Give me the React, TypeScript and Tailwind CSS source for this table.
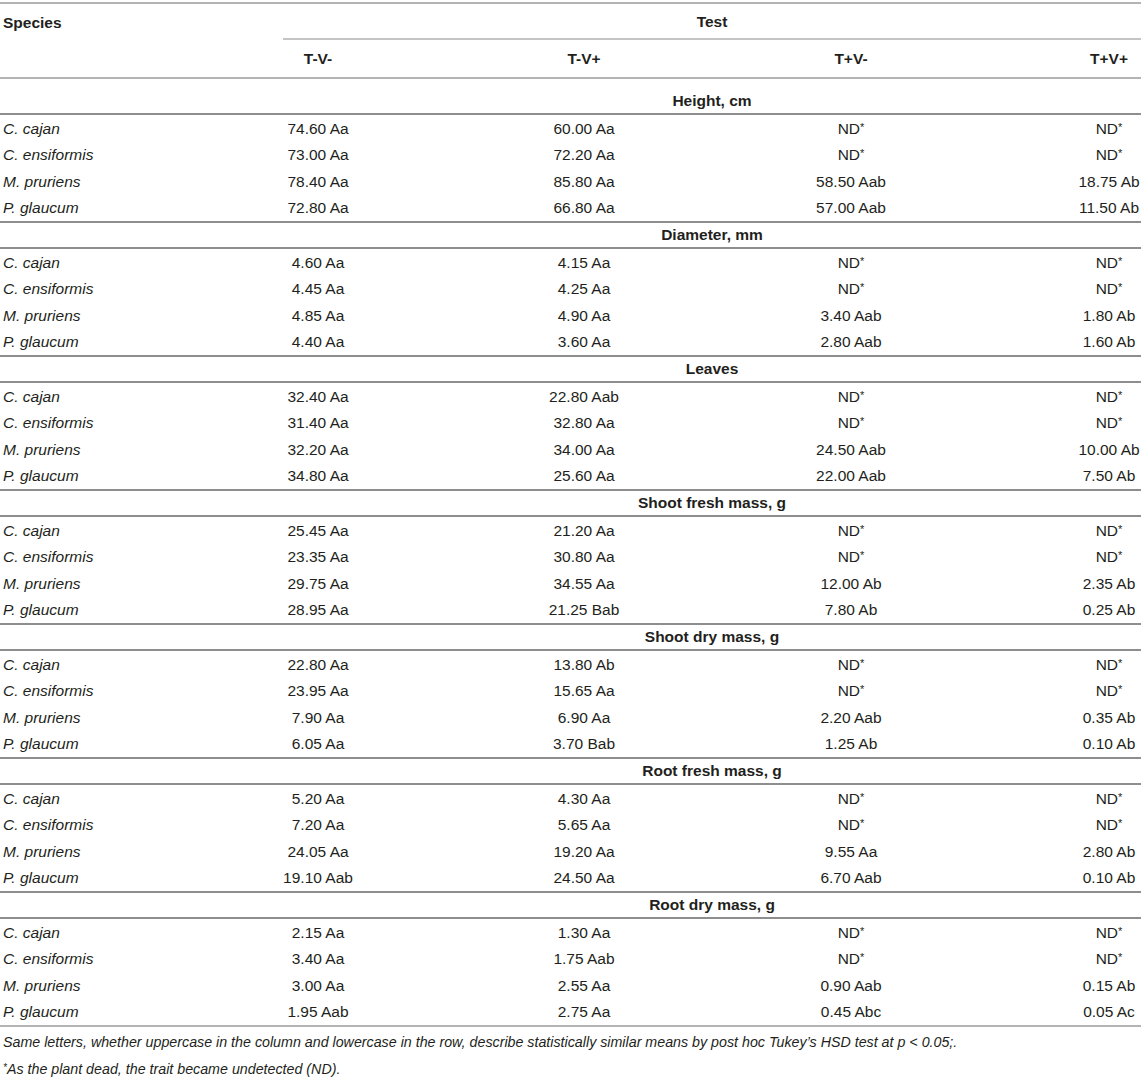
const sections: { title: string; rows: [string, string, string, string, string][] }[] = [
  {
    title: "Height, cm",
    rows: [
      ["C. cajan", "74.60 Aa", "60.00 Aa", "ND*", "ND*"],
      ["C. ensiformis", "73.00 Aa", "72.20 Aa", "ND*", "ND*"],
      ["M. pruriens", "78.40 Aa", "85.80 Aa", "58.50 Aab", "18.75 Ab"],
      ["P. glaucum", "72.80 Aa", "66.80 Aa", "57.00 Aab", "11.50 Ab"],
    ],
  },
  {
    title: "Diameter, mm",
    rows: [
      ["C. cajan", "4.60 Aa", "4.15 Aa", "ND*", "ND*"],
      ["C. ensiformis", "4.45 Aa", "4.25 Aa", "ND*", "ND*"],
      ["M. pruriens", "4.85 Aa", "4.90 Aa", "3.40 Aab", "1.80 Ab"],
      ["P. glaucum", "4.40 Aa", "3.60 Aa", "2.80 Aab", "1.60 Ab"],
    ],
  },
  {
    title: "Leaves",
    rows: [
      ["C. cajan", "32.40 Aa", "22.80 Aab", "ND*", "ND*"],
      ["C. ensiformis", "31.40 Aa", "32.80 Aa", "ND*", "ND*"],
      ["M. pruriens", "32.20 Aa", "34.00 Aa", "24.50 Aab", "10.00 Ab"],
      ["P. glaucum", "34.80 Aa", "25.60 Aa", "22.00 Aab", "7.50 Ab"],
    ],
  },
  {
    title: "Shoot fresh mass, g",
    rows: [
      ["C. cajan", "25.45 Aa", "21.20 Aa", "ND*", "ND*"],
      ["C. ensiformis", "23.35 Aa", "30.80 Aa", "ND*", "ND*"],
      ["M. pruriens", "29.75 Aa", "34.55 Aa", "12.00 Ab", "2.35 Ab"],
      ["P. glaucum", "28.95 Aa", "21.25 Bab", "7.80 Ab", "0.25 Ab"],
    ],
  },
  {
    title: "Shoot dry mass, g",
    rows: [
      ["C. cajan", "22.80 Aa", "13.80 Ab", "ND*", "ND*"],
      ["C. ensiformis", "23.95 Aa", "15.65 Aa", "ND*", "ND*"],
      ["M. pruriens", "7.90 Aa", "6.90 Aa", "2.20 Aab", "0.35 Ab"],
      ["P. glaucum", "6.05 Aa", "3.70 Bab", "1.25 Ab", "0.10 Ab"],
    ],
  },
  {
    title: "Root fresh mass, g",
    rows: [
      ["C. cajan", "5.20 Aa", "4.30 Aa", "ND*", "ND*"],
      ["C. ensiformis", "7.20 Aa", "5.65 Aa", "ND*", "ND*"],
      ["M. pruriens", "24.05 Aa", "19.20 Aa", "9.55 Aa", "2.80 Ab"],
      ["P. glaucum", "19.10 Aab", "24.50 Aa", "6.70 Aab", "0.10 Ab"],
    ],
  },
  {
    title: "Root dry mass, g",
    rows: [
      ["C. cajan", "2.15 Aa", "1.30 Aa", "ND*", "ND*"],
      ["C. ensiformis", "3.40 Aa", "1.75 Aab", "ND*", "ND*"],
      ["M. pruriens", "3.00 Aa", "2.55 Aa", "0.90 Aab", "0.15 Ab"],
      ["P. glaucum", "1.95 Aab", "2.75 Aa", "0.45 Abc", "0.05 Ac"],
    ],
  },
];

const gridCols = "grid grid-cols-[185px_266px_266px_268px_156px]";

// "ND*" shows its asterisk small and raised, as in the printed table
function Value({ value }: { value: string }) {
  if (value.endsWith("*")) {
    return (
      <span>
        {value.slice(0, -1)}
        <span className="text-[11px] align-[3px]">*</span>
      </span>
    );
  }
  return <span>{value}</span>;
}

function Cell({ value, last }: { value: string; last?: boolean }) {
  return (
    <div className={"flex items-center justify-center whitespace-nowrap " + (last ? "pl-[98px] pr-[6px]" : "")}>
      <Value value={value} />
    </div>
  );
}

function DataRow({ row }: { row: [string, string, string, string, string] }) {
  return (
    <div className={gridCols + " h-[26.5px]"}>
      <div className="flex items-center pl-[3px] italic">{row[0]}</div>
      <Cell value={row[1]} />
      <Cell value={row[2]} />
      <Cell value={row[3]} />
      <Cell value={row[4]} last />
    </div>
  );
}

export default function App() {
  return (
    <div className="bg-white pt-[2px] font-['Liberation_Sans',Arial,sans-serif] text-[15.5px] text-[#231f20]">
      <div className="w-[1141px] border-t-2 border-[#b4b4b4]">
        <div className="flex h-[36px]">
          <div className="w-[283px] pl-[3px] pt-[1px] flex items-center font-bold">Species</div>
          <div className="flex-1 flex items-center justify-center pt-[1px] font-bold border-b-2 border-[#c4c4c4]">Test</div>
        </div>
        <div className={gridCols + " h-[39px] font-bold border-b-2 border-[#b4b4b4]"}>
          <div />
          <Cell value="T-V-" />
          <Cell value="T-V+" />
          <Cell value="T+V-" />
          <Cell value="T+V+" last />
        </div>

        {sections.map((s, i) => (
          <div key={s.title}>
            <div
              className={
                "flex items-center justify-center pl-[283px] h-[24px] font-bold border-b-2 border-[#8e8e8e] box-content " +
                (i === 0 ? "pt-[10px]" : "border-t-2")
              }
            >
              {s.title}
            </div>
            {s.rows.map((r) => (
              <DataRow key={r[0]} row={r} />
            ))}
          </div>
        ))}

        <div className="border-t-2 border-[#b4b4b4]" />
        <div className="pt-[2px] pl-[3px] text-[14.25px] italic leading-[26px]">
          <p>
            Same letters, whether uppercase in the column and lowercase in the row, describe statistically similar means by post hoc Tukey’s HSD test at p {"<"} 0.05;.
          </p>
          <p>
            <span className="text-[10px] align-[3px]">*</span>As the plant dead, the trait became undetected (ND).
          </p>
        </div>
      </div>
    </div>
  );
}
